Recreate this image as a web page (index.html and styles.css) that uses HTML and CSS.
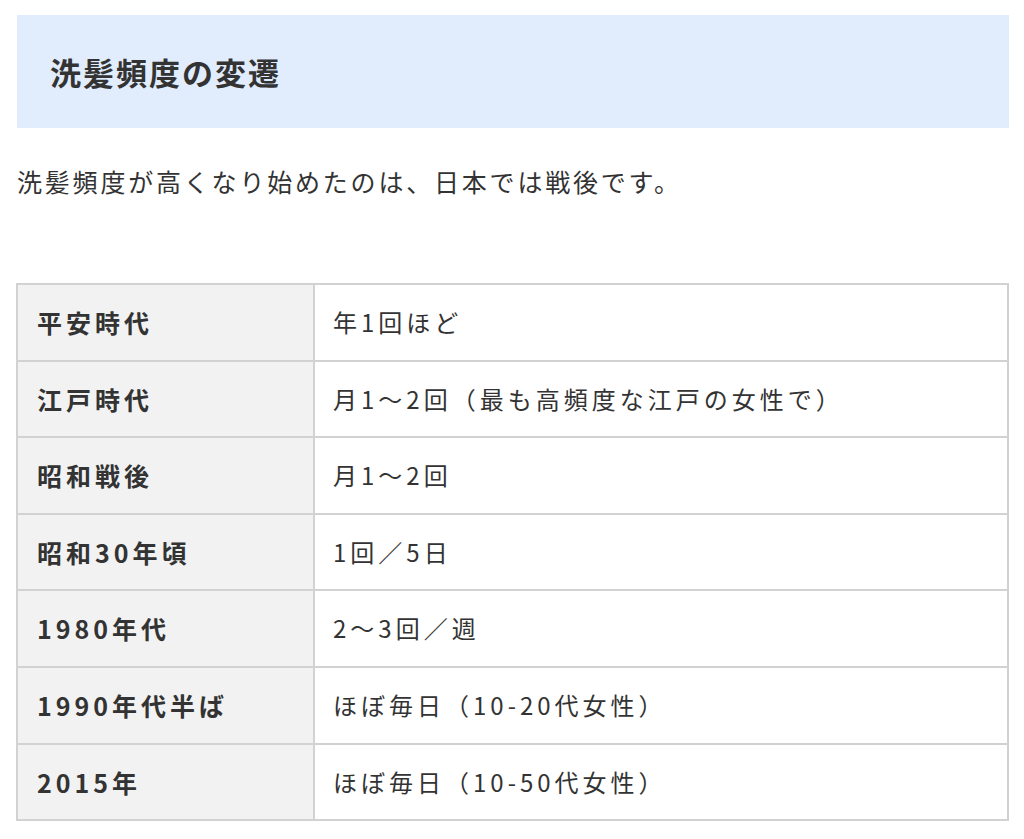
FILE: index.html
```html
<!DOCTYPE html>
<html lang="ja">
<head>
<meta charset="utf-8">
<title>洗髪頻度の変遷</title>
<link rel="stylesheet" href="styles.css">
</head>
<body>
<main class="article">
  <h2 class="heading">洗髪頻度の変遷</h2>
  <p class="lead">洗髪頻度が高くなり始めたのは、日本では戦後です。</p>
  <table class="history">
    <tbody>
      <tr><th>平安時代</th><td>年1回ほど</td></tr>
      <tr><th>江戸時代</th><td>月1～2回（最も高頻度な江戸の女性で）</td></tr>
      <tr><th>昭和戦後</th><td>月1～2回</td></tr>
      <tr><th>昭和30年頃</th><td>1回／5日</td></tr>
      <tr><th>1980年代</th><td>2～3回／週</td></tr>
      <tr><th>1990年代半ば</th><td>ほぼ毎日（10-20代女性）</td></tr>
      <tr><th>2015年</th><td>ほぼ毎日（10-50代女性）</td></tr>
    </tbody>
  </table>
</main>
</body>
</html>
```
FILE: styles.css
```css
html, body {
  margin: 0;
  padding: 0;
  background: #ffffff;
}
body {
  font-family: "Noto Sans CJK JP", "Noto Sans", sans-serif;
  color: #333333;
}
.article {
  padding: 15px 15px 0 17px;
}
.heading {
  margin: 0;
  background: #e1ecfd;
  height: 113px;
  box-sizing: border-box;
  padding: 0 0 0 33px;
  display: flex;
  align-items: center;
  font-size: 31px;
  font-weight: 700;
  letter-spacing: 2px;
  color: #333333;
}
.lead {
  margin: 0;
  padding-top: 35px;
  font-size: 25px;
  line-height: 36px;
  letter-spacing: 2.8px;
}
.history {
  margin-top: 84px;
  margin-left: -1px;
  width: 993px;
  border-collapse: collapse;
  border: 2px solid #d2d2d2;
}
.history th,
.history td {
  border: 2px solid #d2d2d2;
  padding: 20px 18px;
  line-height: 34.6px;
  text-align: left;
  vertical-align: middle;
}
.history th {
  width: 258px;
  background: #f2f2f2;
  font-size: 25px;
  font-weight: 700;
  letter-spacing: 4px;
  padding-left: 19px;
}
.history td {
  background: #ffffff;
  font-size: 24px;
  font-weight: 400;
  letter-spacing: 4px;
}
```
